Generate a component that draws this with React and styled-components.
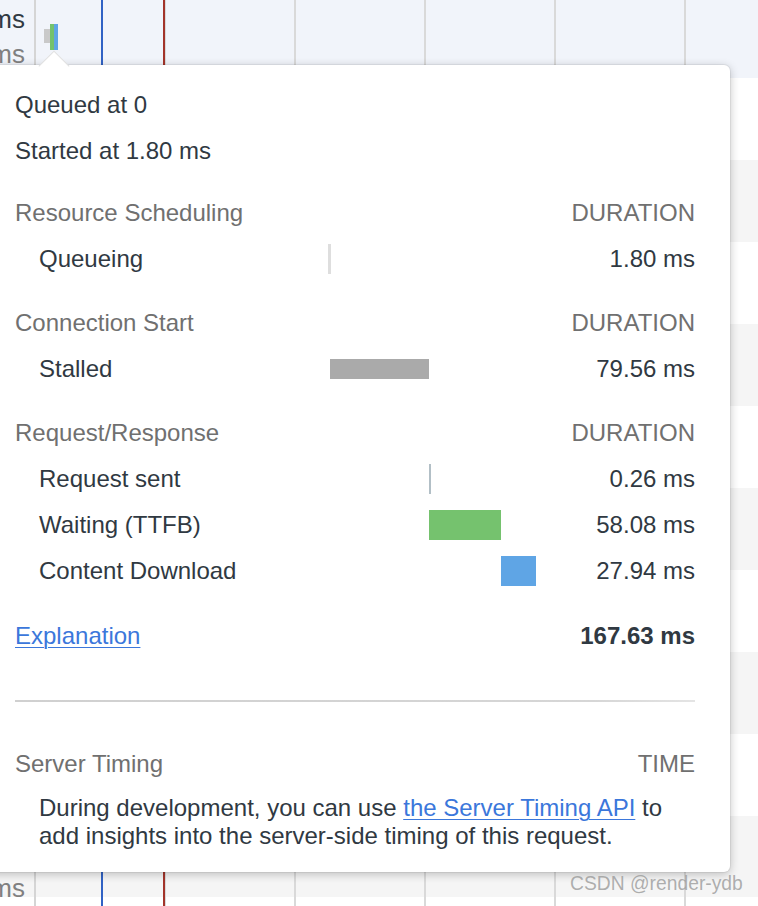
import React from 'react';
import styled, {createGlobalStyle, css} from 'styled-components';

const GlobalStyle = createGlobalStyle`
	html, body {
		margin: 0;
		padding: 0;
		background: #fff;
	}
	body {
		font-family: "Liberation Sans", Arial, Helvetica, sans-serif;
		color: #303942;
		overflow: hidden;
	}
`;

const Page = styled.div`
	position: relative;
	width: 758px;
	height: 906px;
	overflow: hidden;
	background: #fff;
`;

const Grid = styled.div`
	display: flex;
	flex-direction: column;
`;

const Row = styled.div`
	display: flex;
	height: ${props => props.height}px;
	background: #fff;
	${props => props.tone === 'selected' && css`
		background: #f1f4fa;
	`};
	${props => props.tone === 'odd' && css`
		background: #f5f5f5;
	`};
`;

const NameCell = styled.div`
	flex: 0 0 36px;
	box-sizing: border-box;
	padding: ${props => props.padTop}px 9px 0 0;
	border-right: 2px solid #d5d5d5;
	display: flex;
	flex-direction: column;
	align-items: flex-end;
	overflow: hidden;
	font-size: 26px;
	line-height: 35px;
	white-space: nowrap;
`;

const NameLine = styled.span`
	color: ${props => props.muted ? '#808080' : '#303942'};
`;

const WaterfallCell = styled.div`
	flex: 1;
	position: relative;
	background-image: linear-gradient(to right, transparent 128.5px, #d9d9d9 128.5px, #d9d9d9 130px, transparent 130px);
	background-size: 130px 100%;
	&::before, &::after {
		content: '';
		position: absolute;
		top: 0;
		bottom: 0;
		width: 2px;
	}
	&::before {
		left: 65px;
		background: #3162c4;
	}
	&::after {
		left: 127px;
		background: #a3342a;
	}
`;

const MiniBar = styled.div`
	position: absolute;
	background: ${props => props.color};
`;

const Popover = styled.div`
	position: absolute;
	left: -20px;
	top: 65px;
	width: 750px;
	box-sizing: border-box;
	padding: 17px 35px 23px 35px;
	background: #fff;
	border-radius: 6px;
	box-shadow: 0 2px 10px rgba(0, 0, 0, .24), 0 0 0 1px rgba(0, 0, 0, .05);
	font-size: 24px;
	&::before {
		content: '';
		position: absolute;
		top: -10.5px;
		left: 62.5px;
		width: 21px;
		height: 21px;
		background: #fff;
		border-top: 1px solid rgba(0, 0, 0, .12);
		border-left: 1px solid rgba(0, 0, 0, .12);
		transform: rotate(45deg);
	}
`;

const InfoLine = styled.div`
	height: 46px;
	display: flex;
	align-items: center;
	color: #303942;
`;

const Section = styled.div`
	margin-top: ${props => props.gap || 0}px;
`;

const TimingRow = styled.div`
	display: grid;
	grid-template-columns: 313px 208px 1fr;
	height: 46px;
	align-items: center;
`;

const Label = styled.div`
	padding-left: ${props => props.indent ? 24 : 0}px;
	color: ${props => props.muted ? '#707070' : '#303942'};
	white-space: nowrap;
`;

const BarCell = styled.div`
	display: flex;
	align-items: center;
	height: 100%;
`;

const Bar = styled.div`
	flex: none;
	height: ${props => props.thin ? 20 : 30}px;
	background: ${props => props.color};
`;

const Value = styled.div`
	text-align: right;
	color: ${props => props.muted ? '#707070' : '#303942'};
	font-weight: ${props => props.bold ? 700 : 400};
	white-space: nowrap;
`;

const Link = styled.a`
	color: #3b77db;
	text-decoration: underline;
	text-underline-offset: 3px;
	text-decoration-thickness: 1px;
	cursor: pointer;
`;

const Divider = styled.div`
	margin-top: 41px;
	height: 2px;
	background: linear-gradient(to right, #d0d0d0, #d6d6d6 85%, #e4e4e4);
`;

const Description = styled.p`
	margin: 7px 0 0;
	padding-left: 24px;
	line-height: 27.5px;
	color: #303942;
`;

const Watermark = styled.div`
	position: absolute;
	left: 570px;
	top: 873px;
	font-size: 19.3px;
	color: rgba(150, 150, 150, .75);
	white-space: nowrap;
`;

const TOTAL = 167.63;
const SCALE = 208 / TOTAL;

const sections = [
  {
    title: 'Resource Scheduling',
    gap: 16,
    rows: [{label: 'Queueing', start: 0, dur: 1.80, color: '#dedede', min: 3}]
  },
  {
    title: 'Connection Start',
    gap: 18,
    rows: [{label: 'Stalled', start: 1.80, dur: 79.56, color: '#aaaaaa', thin: true}]
  },
  {
    title: 'Request/Response',
    gap: 18,
    rows: [
      {label: 'Request sent', start: 81.36, dur: 0.26, color: '#b2bfc6', min: 2},
      {label: 'Waiting (TTFB)', start: 81.62, dur: 58.08, color: '#75c26e'},
      {label: 'Content Download', start: 139.70, dur: 27.94, color: '#5fa5e5'}
    ]
  }
];

const rows = [
  {height: 78, tone: 'selected', padTop: 2},
  {height: 82}, {height: 82, tone: 'odd'},
  {height: 82}, {height: 82, tone: 'odd'},
  {height: 82}, {height: 82, tone: 'odd'},
  {height: 82}, {height: 82, tone: 'odd'},
  {height: 82}, {height: 81, tone: 'odd', padTop: 20},
  {height: 20}
];

function Timeline({start, dur, color, thin, min}) {
  const width = Math.max(dur * SCALE, min || 0);
  return <BarCell>
    <Bar color={color} thin={thin} style={{marginLeft: start * SCALE, width}}/>
  </BarCell>;
}

export default function App() {
  return <Page>
    <GlobalStyle/>
    <Grid>
      {rows.map((r, i) => <Row key={i} height={r.height} tone={r.tone}>
        <NameCell padTop={r.padTop || 20}>
          <NameLine>143 ms</NameLine>
          <NameLine muted>142 ms</NameLine>
        </NameCell>
        <WaterfallCell>
          {i === 0 && <>
            <MiniBar color="#c9c9c9" style={{left: 8, top: 29, width: 6, height: 14}}/>
            <MiniBar color="#74c26d" style={{left: 14, top: 24, width: 4, height: 26}}/>
            <MiniBar color="#5fa5e5" style={{left: 18, top: 24, width: 4, height: 26}}/>
          </>}
        </WaterfallCell>
      </Row>)}
    </Grid>

    <Popover>
      <InfoLine>Queued at 0</InfoLine>
      <InfoLine>Started at 1.80 ms</InfoLine>

      {sections.map(s => <Section key={s.title} gap={s.gap}>
        <TimingRow>
          <Label muted>{s.title}</Label>
          <div/>
          <Value muted>DURATION</Value>
        </TimingRow>
        {s.rows.map(r => <TimingRow key={r.label}>
          <Label indent>{r.label}</Label>
          <Timeline {...r}/>
          <Value>{r.dur.toFixed(2)} ms</Value>
        </TimingRow>)}
      </Section>)}

      <Section gap={19}>
        <TimingRow>
          <Label><Link>Explanation</Link></Label>
          <div/>
          <Value bold>167.63 ms</Value>
        </TimingRow>
      </Section>

      <Divider/>

      <Section gap={39}>
        <TimingRow>
          <Label muted>Server Timing</Label>
          <div/>
          <Value muted>TIME</Value>
        </TimingRow>
        <Description>
          During development, you can use <Link>the Server Timing API</Link> to add insights into the server-side timing of this request.
        </Description>
      </Section>
    </Popover>

    <Watermark>CSDN @render-ydb</Watermark>
  </Page>;
}
